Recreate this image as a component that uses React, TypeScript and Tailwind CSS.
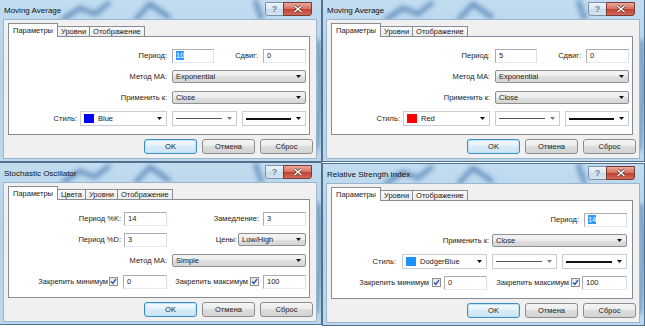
import type { ReactNode } from "react";

function Arrow({ light }: { light?: boolean }) {
  return (
    <svg width="5" height="3" viewBox="0 0 5 3" className="shrink-0">
      <path d="M0 0h5L2.5 3z" fill={light ? "#7a7a7a" : "#111"} />
    </svg>
  );
}

function Input({ value, className, selected }: { value: string; className: string; selected?: boolean }) {
  return (
    <div className={`flex h-[14px] items-center border border-[#abadb3] border-b-[#e3e9ef] border-r-[#dbdfe6] bg-white pl-[3px] ${className}`}>
      {selected ? <span className="bg-[#3399ff] leading-[9px] text-white">{value}</span> : value}
    </div>
  );
}

function Combo({ value, className }: { value: string; className: string }) {
  return (
    <div
      className={`flex h-[13px] items-center justify-between rounded-[2px] border border-[#8e8f8f] bg-[linear-gradient(#f4f4f4,#ececec_50%,#dfdfdf_50%,#d6d6d6)] pl-[3px] pr-[4px] ${className}`}
    >
      <span>{value}</span>
      <Arrow />
    </div>
  );
}

function ColorCombo({ color, name, className }: { color: string; name: string; className: string }) {
  return (
    <div className={`flex h-[15px] items-center border border-[#c9ccd1] bg-white pl-[3px] pr-[4px] ${className}`}>
      <span className="mr-[4px] h-[9px] w-[10px]" style={{ background: color }} />
      <span className="flex-1">{name}</span>
      <Arrow />
    </div>
  );
}

function LineCombo({ thick, className }: { thick?: boolean; className: string }) {
  return (
    <div className={`flex h-[15px] items-center gap-[5px] border border-[#c9ccd1] bg-white pl-[3px] pr-[4px] ${className}`}>
      <span className={thick ? "h-[2px] flex-1 bg-[#111]" : "h-px flex-1 bg-[#555]"} />
      <Arrow light={!thick} />
    </div>
  );
}

function Check() {
  return (
    <div className="flex h-[9px] w-[9px] shrink-0 items-center justify-center border border-[#8f8f8f] bg-[linear-gradient(#dde7f2,#f7f9fc)]">
      <svg width="7" height="7" viewBox="0 0 7 7">
        <path d="M1 3.6 2.8 5.4 6 1.2" fill="none" stroke="#2a4fa8" strokeWidth="1.4" />
      </svg>
    </div>
  );
}

function Button({ label, primary }: { label: string; primary?: boolean }) {
  return (
    <div
      className={
        primary
          ? "flex h-[15px] w-[53px] items-center justify-center rounded-[3px] border border-[#3c8fc4] bg-[linear-gradient(#f3f9fd,#e5f2fa_50%,#d6ebf7_50%,#cde5f4)] shadow-[inset_0_0_0_1px_#bfe3f7]"
          : "flex h-[15px] w-[53px] items-center justify-center rounded-[3px] border border-[#8d8d8d] bg-[linear-gradient(#f4f4f4,#ebebeb_50%,#dddddd_50%,#d3d3d3)]"
      }
    >
      {label}
    </div>
  );
}

function Tabs({ tabs }: { tabs: string[] }) {
  return (
    <div className="flex h-[13px] items-end">
      {tabs.map((t, i) =>
        i === 0 ? (
          <div key={t} className="relative z-10 -mb-px flex h-[14px] items-center border-x border-t border-[#898c95] bg-white px-[4px]">
            {t}
          </div>
        ) : (
          <div key={t} className="flex h-[10px] items-center border-r border-t border-[#898c95] bg-[linear-gradient(#fbfbfb,#ebebeb)] px-[3px]">
            {t}
          </div>
        ),
      )}
    </div>
  );
}

function Dialog({ title, tabs, children, className = "" }: { title: string; tabs: string[]; children: ReactNode; className?: string }) {
  return (
    <div className={`relative h-[163px] w-[323px] shrink-0 overflow-hidden border border-[#52708c] bg-[linear-gradient(#c2dcf0,#b3d2eb_40%,#bcd8ee)] ${className}`}>
      <svg className="absolute inset-0" width="323" height="163">
        <defs>
          <filter id="bl" x="-20%" y="-20%" width="140%" height="140%">
            <feGaussianBlur stdDeviation="2.5" />
          </filter>
        </defs>
        <g filter="url(#bl)" stroke="#2f64a0" strokeWidth="4" fill="none" opacity="0.7">
          <path d="M62 20 L80 8 L95 14 L110 2" />
          <path d="M135 20 L150 4 L170 18" />
          <path d="M255 0 L262 20" />
          <path d="M318 40 L320 90 L316 150" />
        </g>
      </svg>
      <div className="relative flex h-[19px] items-center pl-[4px] pt-[3px] text-[8px] text-[#111]">{title}</div>
      <div className="absolute right-[9px] top-[2px] flex h-[14px]">
        <div className="flex w-[19px] items-center justify-center rounded-bl-[3px] border border-[#7a93ab] bg-[linear-gradient(#eef4fa,#d9e5f0_50%,#c8d9ea_50%,#d6e4f0)] text-[9px] font-bold text-[#6f879f]">
          ?
        </div>
        <div className="-ml-px flex w-[29px] items-center justify-center rounded-br-[3px] border border-[#7a3a32] bg-[linear-gradient(#e9a99c,#d7705f_50%,#c2402f_50%,#d2685a)]">
          <svg width="10" height="8" viewBox="0 0 10 8">
            <path d="M1.5 1 8.5 7M8.5 1 1.5 7" stroke="#5a2a22" strokeWidth="2.8" />
            <path d="M1.5 1 8.5 7M8.5 1 1.5 7" stroke="#fff" strokeWidth="1.6" />
          </svg>
        </div>
      </div>
      <div className="relative ml-[3px] flex h-[140px] w-[314px] flex-col border border-[#9bb5cc] bg-[#f0f0f0] pl-[4px] pt-[3px]">
        <Tabs tabs={tabs} />
        <div className="h-[99px] w-[302px] border border-[#898c95] bg-white pt-[8px]">{children}</div>
        <div className="mt-[4px] flex justify-end gap-[5px] pr-[3px]">
          <Button label="OK" primary />
          <Button label="Отмена" />
          <Button label="Сброс" />
        </div>
      </div>
    </div>
  );
}

function Row({ children }: { children: ReactNode }) {
  return <div className="flex h-[21px] items-center">{children}</div>;
}

export default function App() {
  return (
    <div className="h-[329px] w-[645px] overflow-hidden bg-white font-['Liberation_Sans',Arial,sans-serif] text-[7.5px] leading-none text-[#1b1b1b]">
      <div className="-mt-px flex -ml-px">
        <Dialog title="Moving Average" tabs={["Параметры", "Уровни", "Отображение"]}>
          <Row>
            <div className="w-[158px] text-right">Период:</div>
            <Input value="10" selected className="ml-[5px] w-[42px]" />
            <div className="w-[44px] text-right">Сдвиг:</div>
            <Input value="0" className="ml-[5px] w-[43px]" />
          </Row>
          <Row>
            <div className="w-[158px] text-right">Метод MA:</div>
            <Combo value="Exponential" className="ml-[5px] w-[134px]" />
          </Row>
          <Row>
            <div className="w-[158px] text-right">Применить к:</div>
            <Combo value="Close" className="ml-[5px] w-[134px]" />
          </Row>
          <Row>
            <div className="w-[71px] pr-[3px] text-right">Стиль:</div>
            <ColorCombo color="#0000ff" name="Blue" className="w-[87px]" />
            <LineCombo className="ml-[5px] w-[65px]" />
            <LineCombo thick className="ml-[5px] w-[64px]" />
          </Row>
        </Dialog>
        <Dialog title="Moving Average" tabs={["Параметры", "Уровни", "Отображение"]}>
          <Row>
            <div className="w-[158px] text-right">Период:</div>
            <Input value="5" className="ml-[5px] w-[42px]" />
            <div className="w-[44px] text-right">Сдвиг:</div>
            <Input value="0" className="ml-[5px] w-[43px]" />
          </Row>
          <Row>
            <div className="w-[158px] text-right">Метод MA:</div>
            <Combo value="Exponential" className="ml-[5px] w-[134px]" />
          </Row>
          <Row>
            <div className="w-[158px] text-right">Применить к:</div>
            <Combo value="Close" className="ml-[5px] w-[134px]" />
          </Row>
          <Row>
            <div className="w-[71px] pr-[3px] text-right">Стиль:</div>
            <ColorCombo color="#ff0000" name="Red" className="w-[87px]" />
            <LineCombo className="ml-[5px] w-[65px]" />
            <LineCombo thick className="ml-[5px] w-[64px]" />
          </Row>
        </Dialog>
      </div>
      <div className="flex -ml-px">
        <Dialog title="Stochastic Oscillator" tabs={["Параметры", "Цвета", "Уровни", "Отображение"]}>
          <Row>
            <div className="w-[112px] text-right">Период %K:</div>
            <Input value="14" className="ml-[3px] w-[43px]" />
            <div className="w-[92px] text-right">Замедление:</div>
            <Input value="3" className="ml-[4px] w-[43px]" />
          </Row>
          <Row>
            <div className="w-[112px] text-right">Период %D:</div>
            <Input value="3" className="ml-[3px] w-[43px]" />
            <div className="w-[70px] text-right">Цены:</div>
            <Combo value="Low/High" className="ml-px w-[68px]" />
          </Row>
          <Row>
            <div className="w-[158px] text-right">Метод MA:</div>
            <Combo value="Simple" className="ml-[5px] w-[134px]" />
          </Row>
          <Row>
            <div className="w-[99px] text-right">Закрепить минимум</div>
            <div className="ml-px">
              <Check />
            </div>
            <Input value="0" className="ml-[5px] w-[44px]" />
            <div className="w-[81px] text-right">Закрепить максимум</div>
            <div className="ml-[2px]">
              <Check />
            </div>
            <Input value="100" className="ml-[4px] w-[43px]" />
          </Row>
        </Dialog>
        <Dialog title="Relative Strength Index" tabs={["Параметры", "Уровни", "Отображение"]} className="mt-px">
          <Row>
            <div className="w-[247px] text-right">Период:</div>
            <Input value="14" selected className="ml-[5px] w-[43px]" />
          </Row>
          <Row>
            <div className="w-[157px] text-right">Применить к:</div>
            <Combo value="Close" className="ml-[3px] w-[135px]" />
          </Row>
          <Row>
            <div className="w-[70px] pr-[6px] text-right">Стиль:</div>
            <ColorCombo color="#1e90ff" name="DodgerBlue" className="w-[85px]" />
            <LineCombo className="ml-[5px] w-[65px]" />
            <LineCombo thick className="ml-[5px] w-[65px]" />
          </Row>
          <Row>
            <div className="w-[97px] text-right">Закрепить минимум</div>
            <div className="ml-[3px]">
              <Check />
            </div>
            <Input value="0" className="ml-[3px] w-[43px]" />
            <div className="w-[82px] text-right">Закрепить максимум</div>
            <div className="ml-[2px]">
              <Check />
            </div>
            <Input value="100" className="ml-[2px] w-[45px]" />
          </Row>
        </Dialog>
      </div>
    </div>
  );
}
